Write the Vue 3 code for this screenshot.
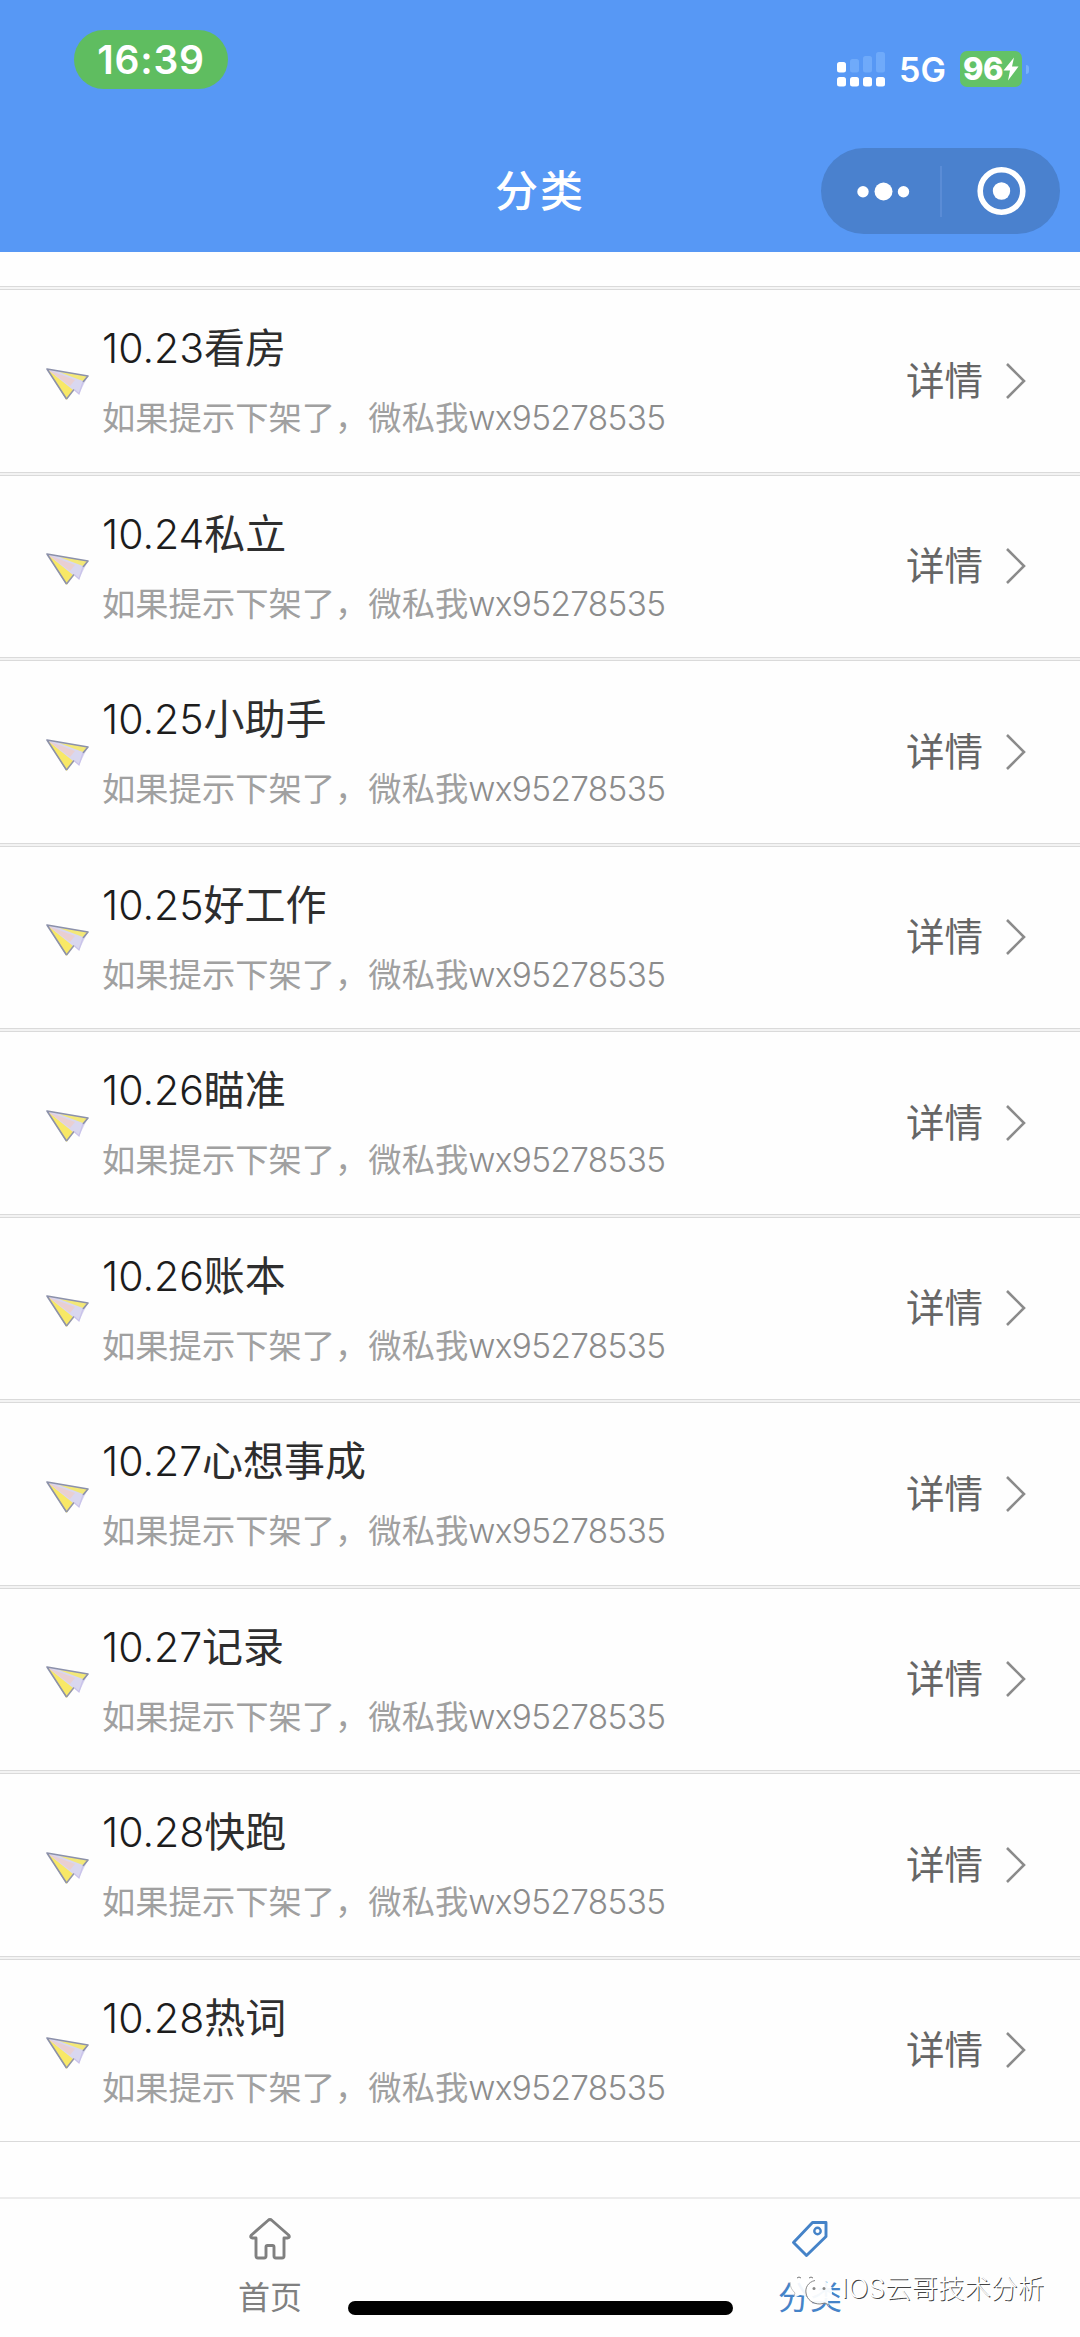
<template>
  <div class="page">
    <header class="header">
      <!-- Status bar -->
      <div class="status">
        <div class="time">16:39</div>
        <div class="status-right">
          <svg class="signal" width="48" height="36" viewBox="0 0 48 36">
            <g fill="#fff">
              <rect x="0" y="11" width="9" height="10.5" rx="2.5" />
              <rect x="0" y="26" width="9" height="9.5" rx="2.5" />
              <rect x="13" y="26" width="9" height="9.5" rx="2.5" />
              <rect x="26" y="26" width="9" height="9.5" rx="2.5" />
              <rect x="39" y="26" width="9" height="9.5" rx="2.5" />
            </g>
            <g fill="#6faafa">
              <rect x="13" y="8" width="9" height="13.5" rx="2.5" />
              <rect x="26" y="5" width="9" height="16.5" rx="2.5" />
              <rect x="39" y="1" width="9" height="20.5" rx="2.5" />
            </g>
          </svg>
          <span class="network">5G</span>
          <div class="battery">
            <span class="level">96</span>
            <svg width="16" height="24" viewBox="0 0 16 24">
              <path d="M11 0.500 L0.500 13.500 H7 L5 23.500 L15.500 9.500 H9 Z" fill="#fff" />
            </svg>
          </div>
          <i class="battery-cap"></i>
        </div>
      </div>

      <!-- Nav bar -->
      <div class="nav">
        <h1 class="title">分类</h1>
        <div class="capsule">
          <svg width="239" height="86" viewBox="0 0 239 86">
            <g fill="#fff">
              <circle cx="42" cy="43.700" r="5.700" />
              <circle cx="62.500" cy="43.500" r="9" />
              <circle cx="82.500" cy="43.700" r="5.700" />
              <circle cx="180.500" cy="43" r="8.700" />
            </g>
            <circle cx="180.500" cy="43" r="21.300" fill="none" stroke="#fff" stroke-width="5.600" />
            <path d="M120 18 V69" stroke="#6090d8" stroke-width="1.500" />
          </svg>
        </div>
      </div>
    </header>

    <!-- List -->
    <main class="list">
      <div v-for="item in items" :key="item.date + item.name" class="row">
        <svg class="plane" width="46" height="36" viewBox="0 0 46 36">
          <path d="M2 2 L43 9 L34 27 L29 22.500 L21.500 33 Z" fill="#d9d7ef" />
          <path d="M2 2 L21.500 33 L28 23 Z" fill="#f8e866" />
          <path d="M14 5 L43 9 L38 14 Z" fill="#f3e878" />
          <path d="M3 3 L30 13 L25 19 Z" fill="#e9cfd2" />
          <path d="M21.500 32 L2 2 L43 9 L38 15" fill="none" stroke="#8c91aa" stroke-width="1.600" stroke-linejoin="round" />
          <path d="M21.500 32 L29 22.500" fill="none" stroke="#9295a8" stroke-width="1.500" />
          <path d="M29 22.500 L34 27 L38 15" fill="none" stroke="#c9c2ea" stroke-width="1.200" />
        </svg>
        <div class="body">
          <div class="name"><span class="date">{{ item.date }}</span>{{ item.name }}</div>
          <div class="note">{{ note }}<span class="wx">{{ wx }}</span></div>
        </div>
        <div class="detail">详情</div>
        <svg class="arrow" width="22" height="38" viewBox="0 0 22 38">
          <path d="M2 2 L19 19 L2 36" fill="none" stroke="#8b8b8b" stroke-width="2.600" />
        </svg>
      </div>
    </main>

    <!-- Tab bar -->
    <footer class="tabbar">
      <div class="tab">
        <svg width="46" height="46" viewBox="0 0 46 46">
          <path
            d="M23 3.500 Q24 3.500 25 4.500 L41.500 19 Q43.500 21.500 40.500 22 H37 V40 Q37 42 35 42 H29 Q27 42 27 40 V31 Q27 29.500 25.500 29.500 H20.500 Q19 29.500 19 31 V40 Q19 42 17 42 H11 Q9 42 9 40 V22 H5.500 Q2.500 21.500 4.500 19 L21 4.500 Q22 3.500 23 3.500 Z"
            fill="none"
            stroke="#808080"
            stroke-width="2.900"
            stroke-linejoin="round"
          />
        </svg>
        <span>首页</span>
      </div>
      <div class="tab active">
        <svg width="46" height="46" viewBox="0 0 46 46">
          <path d="M25.500 6.500 H39 V20.500 L19.500 39.500 L6.500 26.500 Z" fill="none" stroke="#4583c8" stroke-width="2.900" stroke-linejoin="round" />
          <circle cx="30.500" cy="15" r="3.200" fill="none" stroke="#4583c8" stroke-width="2.400" />
        </svg>
        <span>分类</span>
      </div>
      <div class="home-indicator"></div>

      <div class="watermark">
        <svg width="52" height="40" viewBox="0 0 52 40">
          <path d="M16 2 C7 2 1 8 1 15 C1 19 3 22 6 25 L5 30 L11 27 C22 30 32 24 32 15 C32 8 25 2 16 2 Z" fill="#fff" fill-opacity="0.930" />
          <path d="M1 14 C1 19 3 22 6 25 L5 28" fill="none" stroke="#aaa" stroke-width="0.700" />
          <path d="M8 10 Q10 8 12 10 M20 10 Q22 8 24 10" fill="none" stroke="#777" stroke-width="1" />
          <path d="M30 12 C22 12 17 18 17 24 C17 31 23 36 31 36 L36 35 L40 38 L39 33 C42 31 43 28 43 24 C43 17 37 12 30 12 Z" fill="#fff" fill-opacity="0.950" />
          <path d="M26 12.500 C19 14 16 20 17 25 C18 32 24 36 31 36 L36 35 L40 37" fill="none" stroke="#777" stroke-width="0.900" />
          <circle cx="25" cy="20.500" r="1.500" fill="#888" />
          <circle cx="35" cy="20.500" r="1.500" fill="#888" />
        </svg>
        <span>IOS云哥技术分析</span>
      </div>
    </footer>
  </div>
</template>

<script setup>
const note = '如果提示下架了，微私我'
const wx = 'wx95278535'

const items = [
  { date: '10.23', name: '看房' },
  { date: '10.24', name: '私立' },
  { date: '10.25', name: '小助手' },
  { date: '10.25', name: '好工作' },
  { date: '10.26', name: '瞄准' },
  { date: '10.26', name: '账本' },
  { date: '10.27', name: '心想事成' },
  { date: '10.27', name: '记录' },
  { date: '10.28', name: '快跑' },
  { date: '10.28', name: '热词' }
]
</script>

<style>
body {
  margin: 0;
  background: #fefefe;
}
</style>

<style scoped>
.page {
  display: flex;
  flex-direction: column;
  width: 1080px;
  height: 2337px;
  overflow: hidden;
  background: #fefefe;
  font-family: Inter, "Noto Sans CJK SC", sans-serif;
}
svg {
  display: block;
  flex: none;
}

/* header */
.header {
  box-sizing: border-box;
  flex: none;
  height: 252px;
  background: #5798f5;
  color: #fff;
}
.status {
  display: flex;
  justify-content: space-between;
  align-items: flex-start;
  box-sizing: border-box;
  height: 148px;
  padding: 30px 51px 0 74px;
}
.time {
  width: 154px;
  height: 59px;
  border-radius: 30px;
  background: #5fbd60;
  font-size: 39px;
  font-weight: 600;
  line-height: 59px;
  letter-spacing: 0.800px;
  text-align: center;
}
.status-right {
  display: flex;
  align-items: center;
  height: 36px;
  margin-top: 21px;
}
.network {
  width: 46px;
  margin: 2px 15px 0 14px;
  font-size: 34px;
  font-weight: 600;
  line-height: 36px;
}
.battery {
  display: flex;
  align-items: center;
  justify-content: center;
  width: 62px;
  height: 36px;
  border-radius: 7px;
  background: #63c267;
}
.level {
  font-size: 31px;
  font-weight: 800;
  line-height: 36px;
  letter-spacing: -0.5px;
}
.battery-cap {
  width: 3px;
  height: 9px;
  margin-left: 4px;
  border-radius: 0 3px 3px 0;
  background: #78b1fc;
}
.nav {
  display: grid;
  grid-template-columns: 1fr auto 1fr;
  height: 86px;
  padding-right: 20px;
  padding-left: 20px;
}
.title {
  grid-column: 2;
  margin: 0;
  font-size: 43px;
  font-weight: 500;
  line-height: 87px;
  letter-spacing: 2px;
}
.capsule {
  justify-self: end;
  width: 239px;
  height: 86px;
  border-radius: 43px;
  background: #4a81ce;
}

/* list */
.list {
  flex: 1;
  padding-top: 34px;
}
.list::before {
  content: '';
  display: block;
  height: 2px;
  border-top: 1px solid #dadada;
  background: #f5f5f5;
}
.row {
  display: flex;
  align-items: center;
  box-sizing: border-box;
  height: 183.500px;
  margin-bottom: 2px;
  padding: 0 53px 0 45px;
  border-top: 1px solid #dadada;
  border-bottom: 1px solid #dadada;
  box-shadow: 0 2px 0 #f3f3f3;
}
.row:last-child {
  box-shadow: none;
}
.plane {
  margin-top: 8px;
}
.body {
  flex: 1;
  margin-left: 11px;
}
.name {
  color: #2e2e2e;
  font-size: 41px;
  line-height: 60px;
}
.date {
  font-weight: 300;
  color: #1c1c1c;
}
.note {
  margin-top: 15px;
  color: #a0a0a0;
  font-size: 33.300px;
  line-height: 50px;
}
.wx {
  color: #8c8c8c;
  font-weight: 300;
  letter-spacing: -0.600px;
}
.detail {
  margin-right: 22px;
  color: #666;
  font-size: 38.500px;
  line-height: 60px;
}

/* tab bar */
.tabbar {
  position: relative;
  display: flex;
  flex: none;
  box-sizing: border-box;
  height: 140px;
  border-top: 2px solid #ececec;
}
.tab {
  display: flex;
  flex: 1;
  flex-direction: column;
  align-items: center;
  padding-top: 17px;
  color: #808080;
  font-size: 32px;
  line-height: 40px;
}
.tab span {
  margin-top: 16px;
}
.tab.active {
  color: #4583c8;
}
.home-indicator {
  position: absolute;
  left: 348px;
  bottom: 22px;
  width: 385px;
  height: 14px;
  border-radius: 7px;
  background: #000;
}
.watermark {
  position: absolute;
  top: 69px;
  right: 36px;
  display: flex;
  align-items: center;
  color: #fff;
  font-size: 26.500px;
  font-weight: 300;
  line-height: 40px;
  white-space: nowrap;
  text-shadow: 1px 1px 0.500px #444;
}
</style>
